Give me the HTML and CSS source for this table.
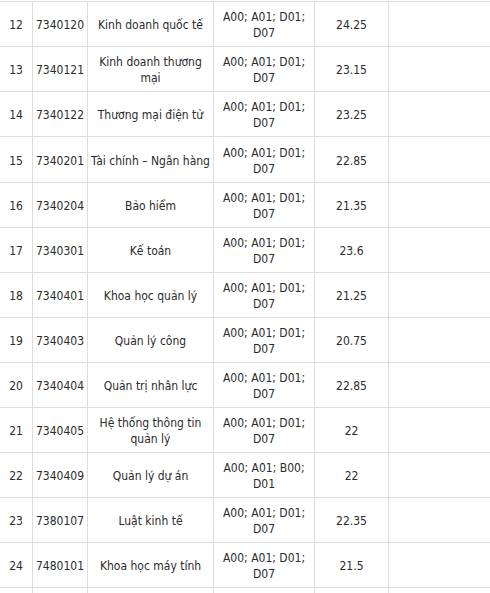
FILE: index.html
```html
<!DOCTYPE html>
<html lang="vi">
<head>
<meta charset="utf-8">
<link rel="stylesheet" href="styles.css">
</head>
<body>
<div class="table">
  <div class="row"><div class="c">12</div><div class="c">7340120</div><div class="c">Kinh doanh quốc tế</div><div class="c">A00; A01; D01; D07</div><div class="c">24.25</div><div class="c"></div></div>
  <div class="row"><div class="c">13</div><div class="c">7340121</div><div class="c">Kinh doanh thương mại</div><div class="c">A00; A01; D01; D07</div><div class="c">23.15</div><div class="c"></div></div>
  <div class="row"><div class="c">14</div><div class="c">7340122</div><div class="c">Thương mại điện tử</div><div class="c">A00; A01; D01; D07</div><div class="c">23.25</div><div class="c"></div></div>
  <div class="row tall"><div class="c">15</div><div class="c">7340201</div><div class="c">Tài chính – Ngân hàng</div><div class="c">A00; A01; D01; D07</div><div class="c">22.85</div><div class="c"></div></div>
  <div class="row"><div class="c">16</div><div class="c">7340204</div><div class="c">Bảo hiểm</div><div class="c">A00; A01; D01; D07</div><div class="c">21.35</div><div class="c"></div></div>
  <div class="row"><div class="c">17</div><div class="c">7340301</div><div class="c">Kế toán</div><div class="c">A00; A01; D01; D07</div><div class="c">23.6</div><div class="c"></div></div>
  <div class="row"><div class="c">18</div><div class="c">7340401</div><div class="c">Khoa học quản lý</div><div class="c">A00; A01; D01; D07</div><div class="c">21.25</div><div class="c"></div></div>
  <div class="row"><div class="c">19</div><div class="c">7340403</div><div class="c">Quản lý công</div><div class="c">A00; A01; D01; D07</div><div class="c">20.75</div><div class="c"></div></div>
  <div class="row"><div class="c">20</div><div class="c">7340404</div><div class="c">Quản trị nhân lực</div><div class="c">A00; A01; D01; D07</div><div class="c">22.85</div><div class="c"></div></div>
  <div class="row"><div class="c">21</div><div class="c">7340405</div><div class="c">Hệ thống thông tin quản lý</div><div class="c">A00; A01; D01; D07</div><div class="c">22</div><div class="c"></div></div>
  <div class="row"><div class="c">22</div><div class="c">7340409</div><div class="c">Quản lý dự án</div><div class="c">A00; A01; B00; D01</div><div class="c">22</div><div class="c"></div></div>
  <div class="row"><div class="c">23</div><div class="c">7380107</div><div class="c">Luật kinh tế</div><div class="c">A00; A01; D01; D07</div><div class="c">22.35</div><div class="c"></div></div>
  <div class="row"><div class="c">24</div><div class="c">7480101</div><div class="c">Khoa học máy tính</div><div class="c">A00; A01; D01; D07</div><div class="c">21.5</div><div class="c"></div></div>
  <div class="row stub"><div class="c"></div><div class="c"></div><div class="c"></div><div class="c"></div><div class="c"></div><div class="c"></div></div>
</div>
</body>
</html>
```
FILE: styles.css
```css
html, body {
  margin: 0;
  padding: 0;
  background: #fff;
  overflow: hidden;
  height: 593px;
}
body {
  font-family: "DejaVu Sans Condensed", "DejaVu Sans", sans-serif;
  font-size: 12px;
  line-height: 16px;
  color: #2b2b2b;
}
.table {
  width: 490px;
  margin-top: 1px;
  border-top: 1px solid #ddd;
}
.row {
  display: grid;
  grid-template-columns: 33px 55px 126px 101px 74px 1fr;
  height: 45px;
}
.row.tall {
  height: 46px;
}
.row.stub {
  height: 5px;
}
.c {
  box-sizing: border-box;
  border-right: 1px solid #ddd;
  border-bottom: 1px solid #ddd;
  display: flex;
  align-items: center;
  justify-content: center;
  text-align: center;
  padding: 2px 2px 0;
}
.row.stub .c {
  border-bottom: none;
}
.c:last-child {
  border-right: none;
}
```
